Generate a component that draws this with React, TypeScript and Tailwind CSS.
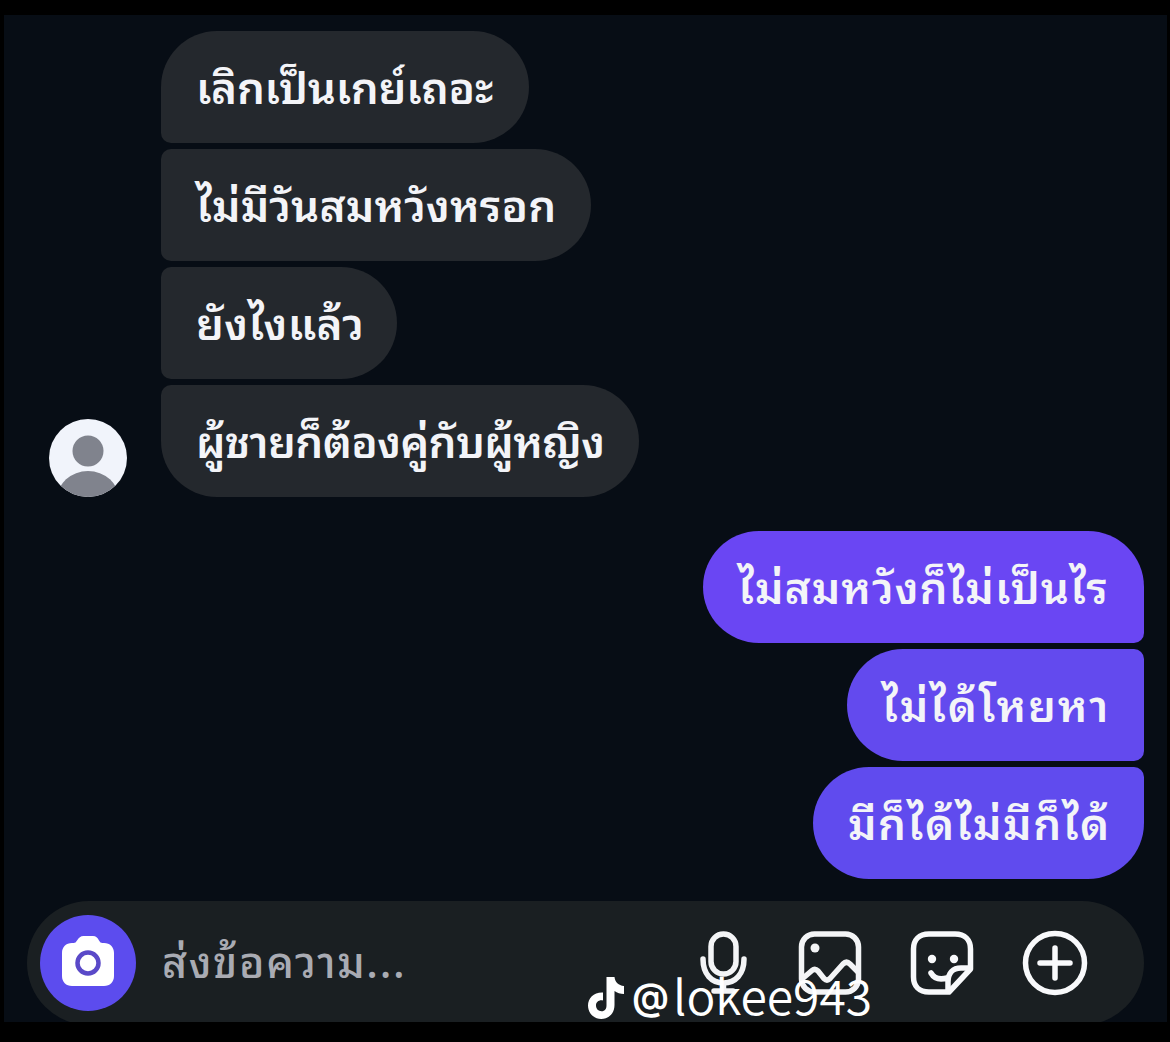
import clsx from "clsx";

interface Message {
  text: string;
  shape: string;
  tracking: string;
}

const received: Message[] = [
  {
    text: "เลิกเป็นเกย์เถอะ",
    shape: "w-[368px] rounded-[56px] rounded-bl-[10px]",
    tracking: "tracking-[-0.3px]",
  },
  {
    text: "ไม่มีวันสมหวังหรอก",
    shape: "w-[430px] rounded-r-[56px] rounded-l-[10px]",
    tracking: "tracking-[0.1px]",
  },
  {
    text: "ยังไงแล้ว",
    shape: "w-[236px] rounded-r-[56px] rounded-l-[10px]",
    tracking: "tracking-[0.3px]",
  },
  {
    text: "ผู้ชายก็ต้องคู่กับผู้หญิง",
    shape: "w-[478px] rounded-[56px] rounded-tl-[10px]",
    tracking: "tracking-[-0.65px]",
  },
];

const sent: Message[] = [
  {
    text: "ไม่สมหวังก็ไม่เป็นไร",
    shape: "w-[441px] rounded-[56px] rounded-br-[10px] bg-[#6a46f3]",
    tracking: "tracking-[1px]",
  },
  {
    text: "ไม่ได้โหยหา",
    shape: "w-[297px] rounded-l-[56px] rounded-r-[10px] bg-[#634aee]",
    tracking: "tracking-[1.8px]",
  },
  {
    text: "มีก็ได้ไม่มีก็ได้",
    shape: "w-[331px] rounded-[56px] rounded-tr-[10px] bg-[#604bee]",
    tracking: "tracking-[1.5px]",
  },
];

function Bubble({ message, className }: { message: Message; className?: string }) {
  return (
    <div
      className={clsx(
        "flex h-28 items-center whitespace-nowrap px-[35px] pb-1.5 text-[44px] font-semibold leading-none",
        message.shape,
        className
      )}
    >
      <span className={message.tracking}>{message.text}</span>
    </div>
  );
}

function Avatar() {
  return (
    <svg viewBox="0 0 78 78" className="size-[78px] rounded-full">
      <rect width="78" height="78" fill="#f1f4fb" />
      <circle cx="39" cy="32" r="15.5" fill="#80838d" />
      <ellipse cx="39" cy="80" rx="31" ry="28" fill="#80838d" />
    </svg>
  );
}

function CameraIcon() {
  return (
    <svg viewBox="0 0 52 50" className="-mt-1 h-[50px] w-[52px]">
      <path
        d="M10 7h1.500c1.700 0 2.500-.8 3.500-2.500C17 1.500 18.500 0 21.500 0h9.500c3 0 4.500 1.500 6 4.500 1 1.700 1.800 2.500 3.500 2.500H42c6 0 10 4 10 10v23c0 6-4 10-10 10H10C4 50 0 46 0 40V17C0 11 4 7 10 7z"
        fill="#fff"
      />
      <circle cx="26" cy="27" r="10.500" fill="none" stroke="#5a49c8" strokeWidth="4.500" />
    </svg>
  );
}

function MicIcon() {
  return (
    <svg viewBox="0 0 50 64" className="h-16 w-[50px]" fill="none" stroke="#f3f4f6" strokeWidth="5.500" strokeLinecap="round">
      <rect x="11" y="3" width="25" height="40" rx="12.500" />
      <path d="M3 28c0 15 8.500 24 20.500 24S44 43 44 28M23.500 52v8M14 60h19" />
    </svg>
  );
}

function PhotoIcon() {
  return (
    <svg viewBox="0 0 64 64" className="size-16" fill="none" stroke="#f3f4f6" strokeWidth="5.500" strokeLinejoin="round">
      <rect x="3.500" y="3" width="57" height="58" rx="13" />
      <circle cx="17" cy="17" r="4.500" fill="#f3f4f6" stroke="none" />
      <path d="M4 48l10-8.500q3-2.500 6 .5l6 7.500q3 3 6 0l13-14.500q3.500-3.500 7 0l8 8" />
    </svg>
  );
}

function StickerIcon() {
  return (
    <svg viewBox="0 0 64 64" className="size-16" fill="none" stroke="#f8f9fb" strokeWidth="5.500" strokeLinecap="round" strokeLinejoin="round">
      <path d="M39 61H19C9 61 3.500 55 3.500 46V18C3.500 9 9 3 19 3h26c10 0 15.500 6 15.500 15v20z" />
      <path d="M38 60V51c0-9 5-14 13-14h9M21 42c3.500 6 9 7 16 5" />
      <circle cx="22" cy="28" r="4.200" fill="#f8f9fb" stroke="none" />
      <circle cx="44" cy="28" r="4.200" fill="#f8f9fb" stroke="none" />
    </svg>
  );
}

function PlusIcon() {
  return (
    <svg viewBox="0 0 66 66" className="size-[66px]" fill="none" stroke="#f8f9fb" strokeWidth="5.500" strokeLinecap="round">
      <circle cx="33" cy="33" r="29.500" />
      <path d="M33 18v30M18 33h30" />
    </svg>
  );
}

function TikTokLogo() {
  return (
    <svg viewBox="0 0 37 42" className="mt-1 h-[42px] w-[37px]" fill="#fff">
      <path d="M18.500 0h8c.5 5 4 8.500 9.500 9v8c-3.700 0-6.800-1-9.500-3v14c0 8.500-6 14-13.300 14S0 36 0 28.500 6 15 15 15.500v8c-4-.8-7 1.500-7 5s2.500 5.700 5.500 5.700c3.500 0 5-2.500 5-6z" />
    </svg>
  );
}

export default function App() {
  return (
    <div className="relative h-[1042px] w-[1170px] overflow-hidden bg-black pl-1 pt-[15px] font-['Noto_Sans_Thai_Looped','Loma','Waree','Garuda','Sarabun','Noto_Sans',sans-serif]">
      <main className="flex h-[1007px] w-[1163px] flex-col overflow-hidden bg-[#070d15] pt-4 text-[#f3f4f8]">
        {/* Incoming messages */}
        <section className="flex items-end gap-[34px] pl-[45px]">
          <Avatar />
          <div className="flex flex-col gap-1.5">
            {received.map((message) => (
              <Bubble key={message.text} message={message} className="bg-[#24282d]" />
            ))}
          </div>
        </section>

        {/* Outgoing messages */}
        <section className="mt-[34px] flex flex-col items-end gap-1.5 pr-[23px]">
          {sent.map((message) => (
            <Bubble key={message.text} message={message} />
          ))}
        </section>

        {/* Composer */}
        <footer className="ml-[23px] mt-[22px] flex h-[124px] w-[1117px] shrink-0 items-center rounded-full bg-[#1a1f22] pl-[13px] pr-14">
          <div className="flex size-24 items-center justify-center rounded-full bg-[#5c4cee]">
            <CameraIcon />
          </div>
          <span className="ml-[26px] w-[245px] whitespace-nowrap pb-2.5 text-[43px] font-medium leading-none tracking-[1.6px] text-[#a9abb3]">
            ส่งข้อความ...
          </span>
          <div className="ml-auto flex items-center gap-12">
            <MicIcon />
            <PhotoIcon />
            <StickerIcon />
            <PlusIcon />
          </div>
        </footer>
      </main>

      {/* Watermark */}
      <div className="absolute left-[588px] top-[972px] flex h-12 items-center whitespace-nowrap font-['Noto_Sans_CJK_SC',sans-serif] leading-none text-white">
        <TikTokLogo />
        <span className="ml-[7px] w-[41px] font-['Inter',sans-serif] text-[37px] font-semibold">@</span>
        <span className="-mt-1 text-[48px] font-[350]">lokee943</span>
      </div>
    </div>
  );
}
